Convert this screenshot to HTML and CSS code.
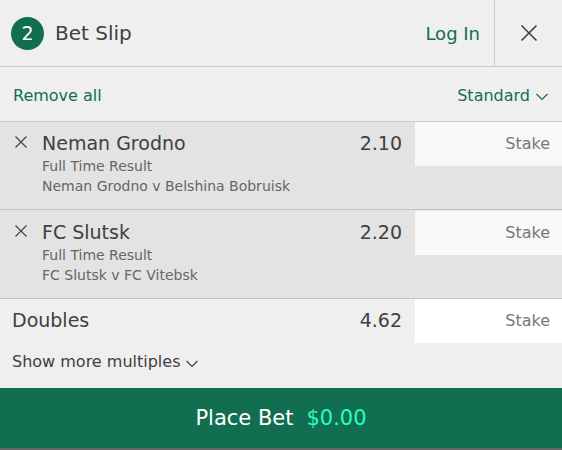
FILE: index.html
```html
<!DOCTYPE html>
<html lang="en">
<head>
<meta charset="utf-8">
<meta name="viewport" content="width=device-width, initial-scale=1">
<title>Bet Slip</title>
<link rel="stylesheet" href="styles.css">
</head>
<body>
<main class="slip">
  <header class="header">
    <span class="count">2</span>
    <h1 class="title">Bet Slip</h1>
    <a class="login" href="#">Log In</a>
    <button class="close" type="button" aria-label="Close">
      <svg width="18" height="18" viewBox="0 0 18 18"><path d="M1.5 1.5l15 15M16.5 1.5l-15 15" fill="none" stroke="currentColor" stroke-width="1.6"/></svg>
    </button>
  </header>
  <div class="toolbar">
    <button class="link" type="button">Remove all</button>
    <button class="link" type="button">Standard<svg class="chevron" width="12" height="8" viewBox="0 0 12 8"><path d="M.5 1L6 6.500L11.500 1" fill="none" stroke="currentColor" stroke-width="1.200"/></svg></button>
  </div>
  <section class="bet">
    <button class="remove" type="button" aria-label="Remove Neman Grodno">
      <svg width="12" height="12" viewBox="0 0 12 12"><path d="M.5 .5l11 11M11.500 .5l-11 11" fill="none" stroke="currentColor" stroke-width="1.100"/></svg>
    </button>
    <div class="info">
      <h2 class="name">Neman Grodno</h2>
      <p class="detail">Full Time Result</p>
      <p class="detail">Neman Grodno v Belshina Bobruisk</p>
    </div>
    <span class="odds">2.10</span>
    <input class="stake" type="text" placeholder="Stake" aria-label="Stake for Neman Grodno">
  </section>
  <section class="bet">
    <button class="remove" type="button" aria-label="Remove FC Slutsk">
      <svg width="12" height="12" viewBox="0 0 12 12"><path d="M.5 .5l11 11M11.500 .5l-11 11" fill="none" stroke="currentColor" stroke-width="1.100"/></svg>
    </button>
    <div class="info">
      <h2 class="name">FC Slutsk</h2>
      <p class="detail">Full Time Result</p>
      <p class="detail">FC Slutsk v FC Vitebsk</p>
    </div>
    <span class="odds">2.20</span>
    <input class="stake" type="text" placeholder="Stake" aria-label="Stake for FC Slutsk">
  </section>
  <section class="multiples">
    <div class="double">
      <h2 class="name">Doubles</h2>
      <span class="odds">4.62</span>
      <input class="stake stake-double" type="text" placeholder="Stake" aria-label="Stake for Doubles">
    </div>
    <button class="more" type="button">Show more multiples<svg class="chevron" width="12" height="8" viewBox="0 0 12 8"><path d="M.5 1L6 6.500L11.500 1" fill="none" stroke="currentColor" stroke-width="1.200"/></svg></button>
  </section>
  <button class="place" type="button"><span>Place Bet</span><span class="amount">$0.00</span></button>
</main>
</body>
</html>
```
FILE: styles.css
```css
* { box-sizing: border-box; }

body {
  margin: 0;
  background: #666;
  color: #404040;
  font-family: "DejaVu Sans", Verdana, sans-serif;
  font-size: 16px;
}

h1, h2, p { margin: 0; font-weight: 400; }

button {
  padding: 0;
  border: 0;
  background: none;
  color: inherit;
  font: inherit;
  cursor: pointer;
}

svg { display: block; }

.slip { background: #efefef; }

.header {
  display: flex;
  align-items: center;
  height: 67px;
  padding-left: 11px;
  border-bottom: 1px solid #ccc;
}

.count {
  display: flex;
  align-items: center;
  justify-content: center;
  width: 33px;
  height: 33px;
  margin-right: 11px;
  border-radius: 50%;
  background: #126e51;
  color: #fff;
  font-size: 19px;
}

.title { flex: 1; font-size: 20px; }

.login {
  margin-right: 14px;
  color: #126e51;
  font-size: 18px;
  text-decoration: none;
}

.close {
  display: flex;
  align-items: center;
  justify-content: center;
  align-self: stretch;
  width: 68px;
  border-left: 1px solid #ccc;
}

.toolbar {
  display: flex;
  align-items: center;
  justify-content: space-between;
  height: 55px;
  padding: 2px 14px 0 13px;
  border-bottom: 1px solid #ccc;
}

.link, .more { display: flex; align-items: center; }

.link { color: #126e51; }

.chevron { margin: 4px 0 0 6px; }

.bet {
  display: flex;
  align-items: flex-start;
  min-height: 88px;
  border-bottom: 1px solid #c4c4c4;
  background: #e3e3e3;
}

.bet + .bet { min-height: 89px; padding-top: 1px; }

.remove {
  flex: none;
  width: 42px;
  padding: 14px 0 14px 15px;
}

.info { flex: 1; padding-bottom: 10px; }

.name, .odds { font-size: 19px; line-height: 24px; }

.name { padding-top: 9px; }

.odds { padding: 9px 13px 0 0; }

.detail {
  color: #666;
  font-size: 14px;
  line-height: 20px;
}

.bet .name { margin-bottom: 1px; }

.stake {
  flex: none;
  width: 147px;
  height: 44px;
  padding: 0 12px 2px;
  border: 0;
  border-radius: 0;
  background: #f8f8f8;
  color: #404040;
  font: inherit;
  text-align: right;
}

.stake::placeholder { color: #777; opacity: 1; }

.stake-double { background: #fff; }

.double {
  display: flex;
  align-items: flex-start;
  padding-left: 12px;
}

.double .name { flex: 1; }

.more { height: 45px; padding: 0 12px 8px; }

.place {
  display: flex;
  align-items: center;
  justify-content: center;
  gap: 13px;
  width: 100%;
  height: 60px;
  background: #126e51;
  color: #fff;
  font-size: 21px;
}

.amount { color: #26ffbe; }
```
